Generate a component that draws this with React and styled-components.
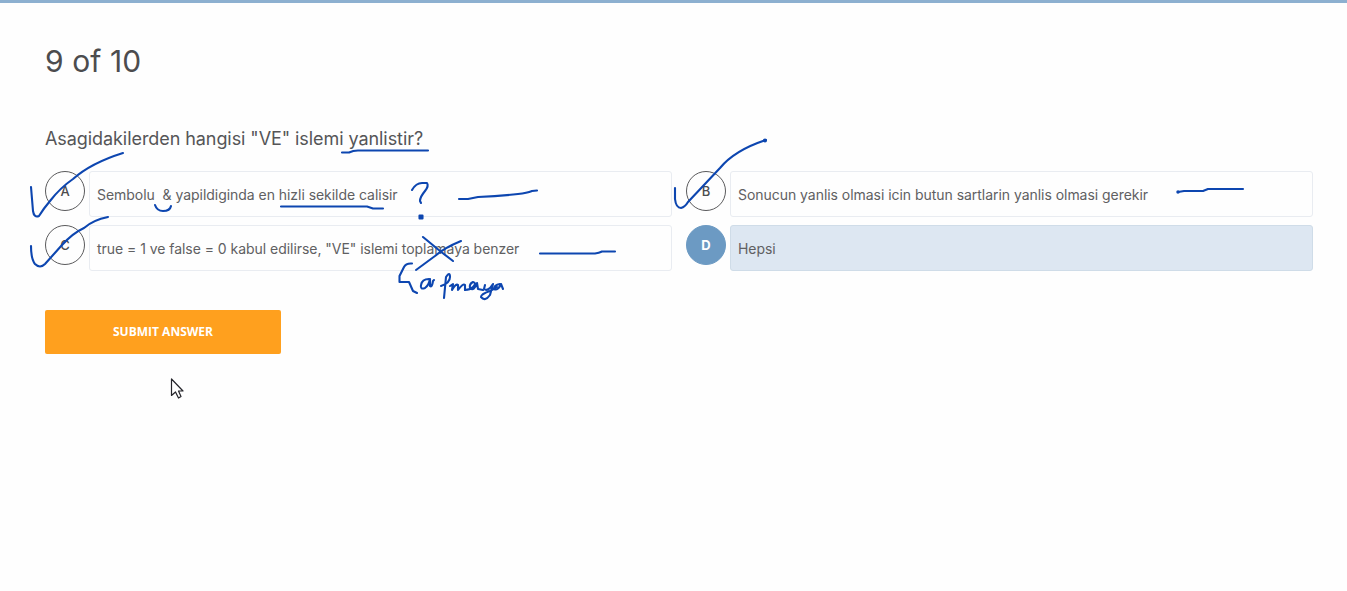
import React from "react";
import styled, { createGlobalStyle } from "styled-components";

const GlobalStyle = createGlobalStyle`
  * { box-sizing: border-box; }
  body {
    margin: 0;
    background: #fefefe;
    font-family: Inter, "Liberation Sans", sans-serif;
    color: #4c4c4e;
    overflow: hidden;
  }
`;

const Page = styled.main`
  position: relative;
  height: 591px;
  padding: 38px 35px 0 45px;
  border-top: 3px solid #8db0d0;
`;

const Progress = styled.h1`
  margin: 0;
  font-size: 30px;
  line-height: 40px;
  font-weight: 400;
  letter-spacing: 0.1px;
`;

const Question = styled.h2`
  margin: 45px 0 0;
  font-size: 18px;
  line-height: 26px;
  font-weight: 400;
  letter-spacing: -0.07px;
  color: #555557;
  white-space: pre;
`;

const Answers = styled.div`
  display: grid;
  grid-template-columns: 627px 627px;
  grid-auto-rows: 46px;
  gap: 8px 14px;
  margin-top: 19px;
`;

const Answer = styled.div`
  display: flex;
  gap: 4px;
`;

const Letter = styled.span`
  display: flex;
  align-items: center;
  justify-content: center;
  width: 40px;
  height: 40px;
  flex: none;
  border: 1px solid ${(p) => (p.$selected ? "#6c9ac3" : "#5a5a5c")};
  border-radius: 50%;
  background: ${(p) => (p.$selected ? "#6c9ac3" : "transparent")};
  color: ${(p) => (p.$selected ? "#ffffff" : "#4c4c4e")};
  font-size: 13px;
  font-weight: ${(p) => (p.$selected ? 700 : 500)};
`;

const AnswerText = styled.div`
  flex: 1;
  padding: 0 7px;
  border: 1px solid ${(p) => (p.$selected ? "#cfdce8" : "#e9ecf1")};
  border-radius: 3px;
  background: ${(p) => (p.$selected ? "#dde7f2" : "transparent")};
  font-size: 14px;
  line-height: 45px;
  font-weight: 400;
  color: #606062;
  letter-spacing: -0.04px;
  white-space: pre;
`;

const SubmitButton = styled.button`
  display: block;
  width: 236px;
  height: 44px;
  margin-top: 39px;
  padding: 0;
  border: 0;
  border-radius: 2px;
  background: #ffa01e;
  color: #fff;
  font: 700 12px/44px "Open Sans", sans-serif;
`;

const Ink = styled.svg`
  position: absolute;
  top: -3px;
  left: 0;
  pointer-events: none;
  fill: none;
  stroke: #0d46b0;
  stroke-width: 2.1;
  stroke-linecap: round;
  stroke-linejoin: round;
`;

const answers = [
  { letter: "A", text: "Sembolu  & yapildiginda en hizli sekilde calisir" },
  { letter: "B", text: "Sonucun yanlis olmasi icin butun sartlarin yanlis olmasi gerekir" },
  { letter: "C", text: 'true = 1 ve false = 0 kabul edilirse, "VE" islemi toplamaya benzer' },
  { letter: "D", text: "Hepsi", selected: true },
];

const strokes = [
  "M31 187 L33 211 Q34 218 39 216 Q44 208 50 201 Q60 188 73 179 Q91 163 123 153",
  "M31 246 Q31 259 35 264 Q40 269 45 264 L62 245 Q73 233 84 228 Q93 220 108 217",
  "M675 188 V199 Q676 208 681 208 Q685 207 688 202 L704 185 L720 168 Q735 150 766 140",
  "M342 152.500 H349 Q353 150.500 358 150.500 H428",
  "M281 206.500 H367 L373 208.500 H383",
  "M155 205 Q157 211 163 211 Q170 211 171 206",
  "M412 190 Q416 183 422 183 H427 Q429 186 425 191 Q420 197 420 201 L421 203",
  "M459 199 H468 L478 197 Q500 196 518 194 Q527 193 532 191 L537 190.500",
  "M540 253.500 H595 Q599 253 602 251.500 H615",
  "M1178 192 L1184 191 H1203 L1208 189 H1243",
  "M423 237 L440 251 L453 261",
  "M461 241 Q444 248 435 256 L416 270",
  "M412 263.500 Q406 263 404 267 L399.500 276 V282 L409 282 L413 291 L417 293",
  "M429 279 Q422 279 421 285 Q420 290 425 288 Q429 285 430 279 L430 286 Q432 288 433 281 L434 280",
  "M444 298 L446 277 Q450 271 450 277 Q450 283 441 286",
  "M450 286 L453 284 L452 290 Q456 283 458 285 L458 290 Q463 283 465 285 L465 290",
  "M465 290 Q470 290 473 287 Q477 283 473 282 Q469 284 470 288 Q474 292 477 283 L478 289 L483 290",
  "M485 285 L484 289 Q488 292 493 284 L490 295 Q485 302 481 297 Q481 294 490 291 L497 287",
  "M500 284 Q494 285 494 289 Q498 291 501 284 L503 289",
];

export default function App() {
  return (
    <>
      <GlobalStyle />
      <Page>
        <Progress>9 of 10</Progress>
        <Question>Asagidakilerden hangisi "VE" islemi yanlistir?</Question>
        <Answers>
          {answers.map((a) => (
            <Answer key={a.letter}>
              <Letter $selected={a.selected}>{a.letter}</Letter>
              <AnswerText $selected={a.selected}>{a.text}</AnswerText>
            </Answer>
          ))}
        </Answers>
        <SubmitButton>SUBMIT ANSWER</SubmitButton>
        <Ink width="1347" height="591" viewBox="0 0 1347 591">
          {strokes.map((d) => (
            <path key={d} d={d} />
          ))}
          <rect x="419.500" y="215.500" width="3" height="3" fill="#0d46b0" />
          <circle cx="765" cy="140.500" r="1" fill="#0d46b0" />
          <circle cx="1178" cy="192" r=".7" fill="#0d46b0" />
          <path
            d="M171.500 379 V395.500 L175.500 392 L178.500 398 L181 396.500 L178.500 391 H183 Z"
            fill="#fff"
            stroke="#25252b"
            strokeWidth="1.200"
          />
        </Ink>
      </Page>
    </>
  );
}
